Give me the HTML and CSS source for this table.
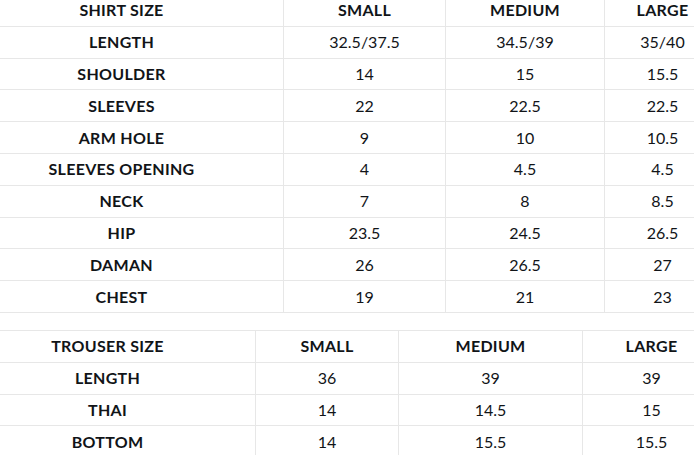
FILE: index.html
```html
<!DOCTYPE html>
<html>
<head>
<meta charset="utf-8">
<link rel="stylesheet" href="styles.css">
</head>
<body>
<div class="page">
  <table class="size-table shirt">
    <colgroup><col class="c1"><col class="c2"><col class="c3"><col class="c4"></colgroup>
    <tr class="head"><td>SHIRT SIZE</td><td>SMALL</td><td>MEDIUM</td><td>LARGE</td></tr>
    <tr><th>LENGTH</th><td>32.5/37.5</td><td>34.5/39</td><td>35/40</td></tr>
    <tr><th>SHOULDER</th><td>14</td><td>15</td><td>15.5</td></tr>
    <tr><th>SLEEVES</th><td>22</td><td>22.5</td><td>22.5</td></tr>
    <tr><th>ARM HOLE</th><td>9</td><td>10</td><td>10.5</td></tr>
    <tr><th>SLEEVES OPENING</th><td>4</td><td>4.5</td><td>4.5</td></tr>
    <tr><th>NECK</th><td>7</td><td>8</td><td>8.5</td></tr>
    <tr><th>HIP</th><td>23.5</td><td>24.5</td><td>26.5</td></tr>
    <tr><th>DAMAN</th><td>26</td><td>26.5</td><td>27</td></tr>
    <tr><th>CHEST</th><td>19</td><td>21</td><td>23</td></tr>
  </table>
  <table class="size-table trouser">
    <colgroup><col class="c1"><col class="c2"><col class="c3"><col class="c4"></colgroup>
    <tr class="head"><td>TROUSER SIZE</td><td>SMALL</td><td>MEDIUM</td><td>LARGE</td></tr>
    <tr><th>LENGTH</th><td>36</td><td>39</td><td>39</td></tr>
    <tr><th>THAI</th><td>14</td><td>14.5</td><td>15</td></tr>
    <tr><th>BOTTOM</th><td>14</td><td>15.5</td><td>15.5</td></tr>
  </table>
</div>
</body>
</html>
```
FILE: styles.css
```css
html, body {
  margin: 0;
  padding: 0;
  background: #fff;
  overflow: hidden;
}
.page {
  margin: -6px 0 0 -41px;
  width: 761px;
  font-family: Lato, "Open Sans", sans-serif;
  font-size: 16px;
  color: #111418;
}
.size-table {
  width: 761px;
  border-collapse: collapse;
  table-layout: fixed;
}
.size-table td, .size-table th {
  border: 1px solid #e7e7e7;
  height: 30.8px;
  padding: 0;
  text-align: center;
  vertical-align: middle;
  font-weight: 400;
  line-height: 18px;
}
.size-table th, .size-table .head td {
  font-weight: 700;
  letter-spacing: 0.3px;
}
.shirt .c1 { width: 324px; }
.shirt .c2 { width: 162px; }
.shirt .c3 { width: 159px; }
.shirt .c4 { width: 116px; }
.trouser { margin-top: 17px; }
.trouser .c1 { width: 296px; }
.trouser .c2 { width: 143px; }
.trouser .c3 { width: 184px; }
.trouser .c4 { width: 138px; }
```
